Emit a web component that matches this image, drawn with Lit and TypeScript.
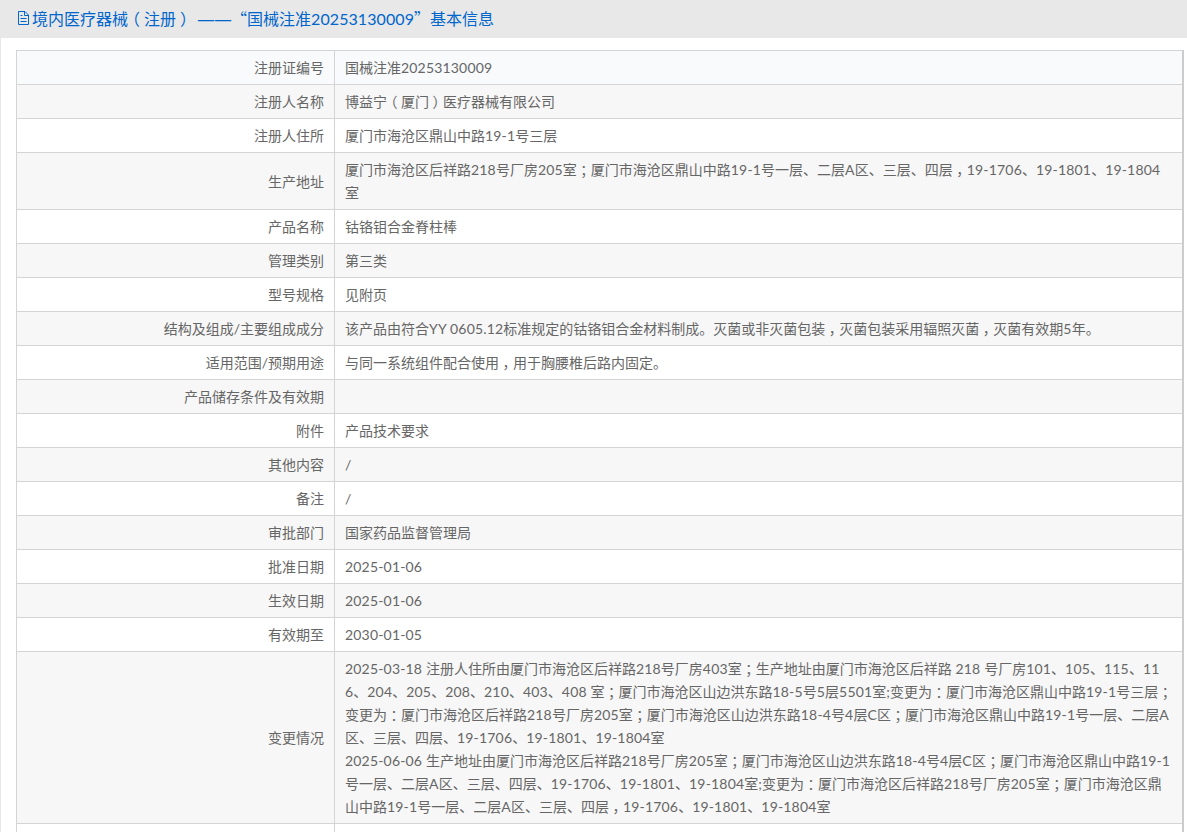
import { LitElement, html, css } from "lit";
import { customElement } from "lit/decorators.js";

const ROWS: [string, string[]][] = [
  ["注册证编号", ["国械注准20253130009"]],
  ["注册人名称", ["博益宁（厦门）医疗器械有限公司"]],
  ["注册人住所", ["厦门市海沧区鼎山中路19-1号三层"]],
  ["生产地址", ["厦门市海沧区后祥路218号厂房205室；厦门市海沧区鼎山中路19-1号一层、二层A区、三层、四层，19-1706、19-1801、19-1804", "室"]],
  ["产品名称", ["钴铬钼合金脊柱棒"]],
  ["管理类别", ["第三类"]],
  ["型号规格", ["见附页"]],
  ["结构及组成/主要组成成分", ["该产品由符合YY 0605.12标准规定的钴铬钼合金材料制成。灭菌或非灭菌包装，灭菌包装采用辐照灭菌，灭菌有效期5年。"]],
  ["适用范围/预期用途", ["与同一系统组件配合使用，用于胸腰椎后路内固定。"]],
  ["产品储存条件及有效期", [""]],
  ["附件", ["产品技术要求"]],
  ["其他内容", ["/"]],
  ["备注", ["/"]],
  ["审批部门", ["国家药品监督管理局"]],
  ["批准日期", ["2025-01-06"]],
  ["生效日期", ["2025-01-06"]],
  ["有效期至", ["2030-01-05"]],
  ["变更情况", [
    "2025-03-18 注册人住所由厦门市海沧区后祥路218号厂房403室；生产地址由厦门市海沧区后祥路 218 号厂房101、105、115、11",
    "6、204、205、208、210、403、408 室；厦门市海沧区山边洪东路18-5号5层5501室;变更为：厦门市海沧区鼎山中路19-1号三层；",
    "变更为：厦门市海沧区后祥路218号厂房205室；厦门市海沧区山边洪东路18-4号4层C区；厦门市海沧区鼎山中路19-1号一层、二层A",
    "区、三层、四层、19-1706、19-1801、19-1804室",
    "2025-06-06 生产地址由厦门市海沧区后祥路218号厂房205室；厦门市海沧区山边洪东路18-4号4层C区；厦门市海沧区鼎山中路19-1",
    "号一层、二层A区、三层、四层、19-1706、19-1801、19-1804室;变更为：厦门市海沧区后祥路218号厂房205室；厦门市海沧区鼎",
    "山中路19-1号一层、二层A区、三层、四层，19-1706、19-1801、19-1804室",
  ]],
  ["", [""]],
];

const runs = (s: string) =>
  s.split(/([；，：（）]|[0-9A-Za-z.\- ]+)/).map((part, i) => {
    if (!(i % 2)) return part;
    return /[；，：（）]/.test(part)
      ? html`<span class="p">${part}</span>`
      : html`<span class="l">${part}</span>`;
  });

@customElement("app-root")
export class AppRoot extends LitElement {
  static styles = css`
    :host {
      display: block;
      height: 832px;
      overflow: hidden;
      background: #fff;
      font-family: "Lato", "Noto Sans CJK SC", sans-serif;
      font-size: 14px;
      color: #666;
      box-sizing: border-box;
      border-left: 1px solid #e8e8e8;
    }
    .p {
      display: inline-block;
      width: 1em;
      text-align: center;
      font-family: "Noto Sans CJK SC", sans-serif;
      font-feature-settings: "halt";
      line-height: 1;
    }
    .l { letter-spacing: 0.18px; }
    .head {
      height: 38px;
      margin-left: -1px;
      background: #e8e8e8;
      display: flex;
      align-items: center;
      gap: 2px;
      padding: 0 0 2px 17px;
      box-sizing: border-box;
      font-size: 16px;
      color: #0066cc;
      white-space: nowrap;
    }
    .head svg { flex: none; width: 13px; height: 14px; }
    .head .l { letter-spacing: 0.08px; }
    .dash {
      font-family: "DejaVu Sans", sans-serif;
      font-size: 18px;
      letter-spacing: -1px;
      margin: 0 1px 0 5px;
    }
    .q {
      display: inline-block;
      width: 16px;
      font-family: "Noto Sans CJK SC", sans-serif;
      line-height: 1;
    }
    .q.open { text-align: right; margin-left: -1px; }
    .q.close { text-align: left; }
    .wrap { padding: 12px 3px 0 15px; }
    table {
      width: 100%;
      border-collapse: collapse;
      table-layout: fixed;
      border-style: solid;
      border-color: #ccc;
      border-width: 1px 2px 1px 1px;
    }
    td {
      border: 1px solid #d4d4d4;
      padding: 5px 10px;
      line-height: 23px;
      white-space: nowrap;
      vertical-align: middle;
    }
    td.k { width: 297px; text-align: right; }
    tr.alt td { background: #f7f7f7; }
    tr.hover td { background: #f8fafc; }
    .empty { height: 23px; }
  `;

  render() {
    return html`
      <div class="head">
        <svg viewBox="0 0 13 14" fill="none" stroke="#0066cc" stroke-width="1">
          <path d="M1.5 .5h6.5l3.5 3.5v9.5h-10z" />
          <path d="M7.5 .5v4h4M3.5 4.5h2M3.5 7.5h6M3.5 10.5h6" />
        </svg>
        <span>境内医疗器械${runs("（")}注册${runs("）")}<span class="dash">——</span><span class="q open">“</span>国械注准${runs("20253130009")}<span class="q close">”</span>基本信息</span>
      </div>
      <div class="wrap">
        <table>
          ${ROWS.map(
            ([k, v], i) => html`
              <tr class=${i === 0 ? "hover" : i % 2 ? "alt" : ""}>
                <td class="k">${k}</td>
                <td>
                  ${v.map((l, j) => html`${j ? html`<br />` : ""}${runs(l)}`)}
                  ${v[0] ? "" : html`<div class="empty"></div>`}
                </td>
              </tr>
            `
          )}
        </table>
      </div>
    `;
  }
}
